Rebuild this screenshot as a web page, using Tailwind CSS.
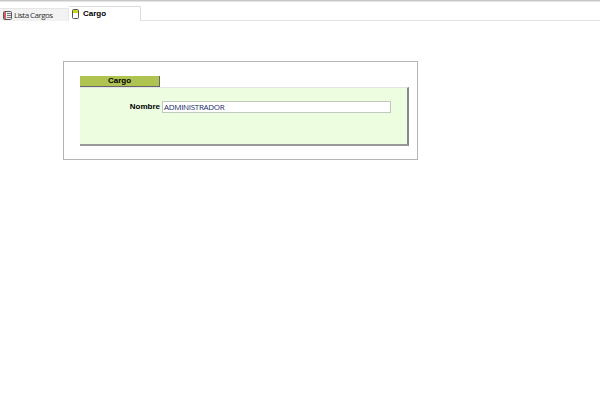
<!DOCTYPE html>
<html><head><meta charset="utf-8">
<script src="https://cdn.jsdelivr.net/npm/@tailwindcss/browser@4"></script>
</head>
<body class="bg-white font-['Liberation_Sans',sans-serif] text-[8px] text-black">
<div class="w-[600px] h-[410px] overflow-hidden bg-white">
  <div class="h-[2px] bg-[#c8c8c8] border-b border-[#e4e4e4]"></div>
  <div class="h-[19px] flex items-end border-b border-[#e3e3e3]">
    <div class="w-[69px] h-[13px] -mb-px bg-[#f2f2f2] border-t border-r border-[#e6e6e6] flex items-center pl-[3px] gap-[2px] font-['Open_Sans',sans-serif] text-[8px] tracking-[-0.55px] text-[#333]">
      <svg width="9" height="9" viewBox="0 0 9 9"><rect x="0.5" y="0.5" width="8" height="8" rx="1" fill="#eee" stroke="#555"/><rect x="1" y="1" width="2" height="7" fill="#d06060"/><path d="M4 2.5h4M4 4.5h4M4 6.5h4" stroke="#777"/></svg>
      <span>Lista Cargos</span>
    </div>
    <div class="w-[72px] h-[15px] -mb-px bg-white border-t border-r border-[#dcdcdc] flex items-center pl-[3px] gap-[4px] font-bold text-[8px]">
      <svg width="7" height="10" viewBox="0 0 7 10"><rect x="0.5" y="0.5" width="6" height="9" rx="1" fill="#fff" stroke="#555"/><rect x="1" y="1" width="5" height="3" fill="#c8d820"/></svg>
      <span>Cargo</span>
    </div>
  </div>
  <div class="ml-[63px] mt-[40px] w-[355px] h-[99px] border border-[#b4b4b8] pl-[16px] pt-[14px]">
    <div class="w-[80px] h-[11px] bg-[#afc450] border-r border-b border-[#666] flex items-center justify-center font-bold text-[8px]">Cargo</div>
    <div class="w-[329px] h-[59px] bg-[#edfddf] border-t border-[#e4e4e8] border-r-2 border-b-2 border-r-[#888] border-b-[#999] flex items-start pt-[13px]">
      <div class="w-[80px] text-right font-bold text-[8px] leading-[12px]">Nombre</div>
      <div class="ml-[2px] w-[229px] h-[12px] bg-white border border-[#c0c8c0] flex items-center pl-[1px] font-['Open_Sans',sans-serif] text-[8px] tracking-[-0.3px] text-[#1a2a6a]">ADMINISTRADOR</div>
    </div>
  </div>
</div>
</body></html>
